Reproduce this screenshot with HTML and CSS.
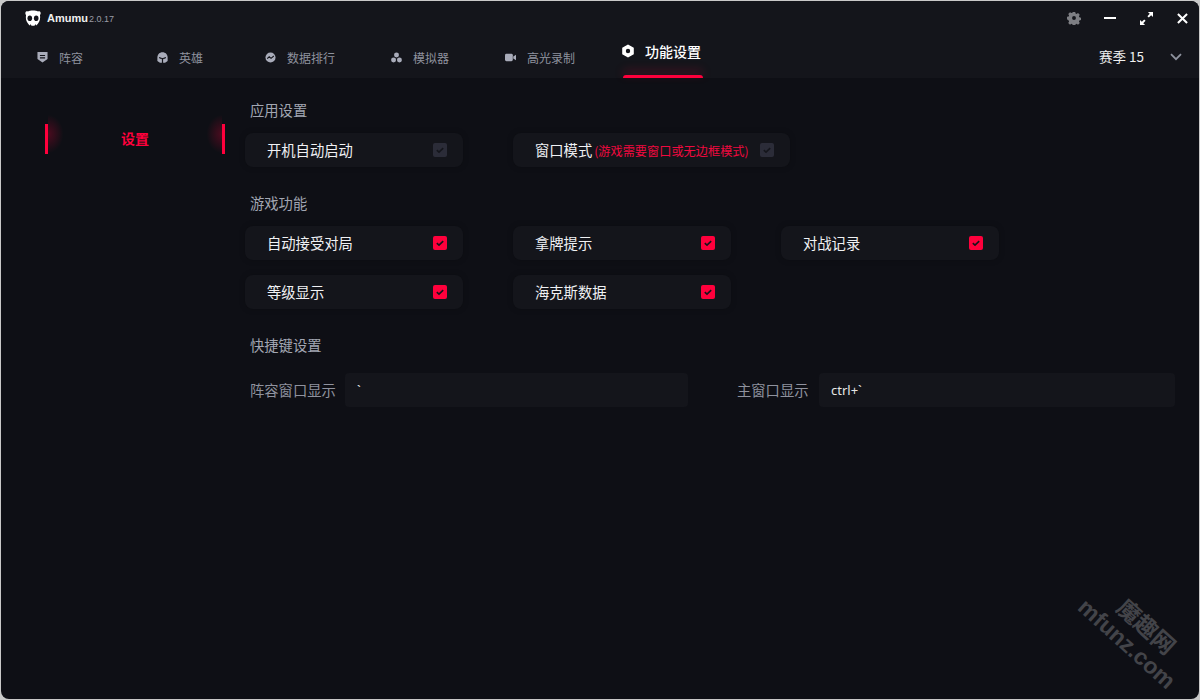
FILE: index.html
```html
<!DOCTYPE html>
<html lang="zh-CN">
<head>
    <meta charset="UTF-8">
    <meta name="viewport" content="width=device-width, initial-scale=1.0">
    <title>Amumu</title>
    <link rel="stylesheet" href="styles.css">
</head>
<body>
    <div class="window">
        <header class="header">
            <div class="titlebar">
                <svg class="logo" viewBox="0 0 16 16">
                    <path fill="#fff" d="M3 1.500C5 .3 11 .3 13 1.500 14 1 15.400 1.400 15.600 2.800 15.800 4 15.400 4.600 15 5 15.400 8 15 11 13.400 13 12.400 14.200 11.500 15.400 11 15.400L10.500 14 9.500 15.800H6.500L5.500 14 5 15.400C4.500 15.400 3.600 14.200 2.600 13 1 11 .6 8 1 5 .6 4.600 .2 4 .4 2.800 .6 1.400 2 1 3 1.500Z"/>
                    <ellipse cx="4.800" cy="8.300" rx="2.300" ry="2.800" fill="#14151b"/>
                    <ellipse cx="11.200" cy="8.300" rx="2.300" ry="2.800" fill="#14151b"/>
                </svg>
                <span class="app-name">Amumu</span>
                <span class="app-version">2.0.17</span>
                <div class="window-controls">
                    <svg class="control gear" viewBox="0 0 16 16">
                        <path fill="#7d7e83" fill-rule="evenodd" d="M6.600 1h2.800l.4 1.900 1.100.5 1.700-1 2 2-1 1.700.5 1.100 1.900.4v2.800l-1.900.4-.5 1.100 1 1.700-2 2-1.700-1-1.100.5-.4 1.900H6.600l-.4-1.900-1.100-.5-1.700 1-2-2 1-1.700-.5-1.100L0 9.400V6.600l1.900-.4.5-1.100-1-1.700 2-2 1.700 1 1.100-.5zM8 5.800a2.200 2.200 0 1 0 0 4.400 2.200 2.200 0 0 0 0-4.400z"/>
                    </svg>
                    <svg class="control minimize" viewBox="0 0 12 12">
                        <rect y="5" width="12" height="2" fill="#fff"/>
                    </svg>
                    <svg class="control maximize" viewBox="0 0 14 14">
                        <path fill="#fff" d="M8.500 0H14V5.500L12 3.500 9.500 6 8 4.500 10.500 2zM5.500 14H0V8.500L2 10.500 4.500 8 6 9.500 3.500 12z"/>
                    </svg>
                    <svg class="control close" viewBox="0 0 12 12">
                        <path stroke="#fff" stroke-width="2.200" d="M1 1l10 10M11 1L1 11"/>
                    </svg>
                </div>
            </div>
            <nav class="nav">
                <a class="nav-item">
                    <svg class="nav-icon" viewBox="0 0 12 12">
                        <path fill="#a9acba" fill-rule="evenodd" d="M.5 0h11v7.500L6 11.500.5 7.500zM3.200 3.200v1.200h5.600V3.200zM3.200 5.800V7h5.600V5.800z"/>
                    </svg>
                    <span>阵容</span>
                </a>
                <a class="nav-item">
                    <svg class="nav-icon" viewBox="0 0 12 12">
                        <path fill="#a9acba" d="M6 .3C9.200 .3 11.600 2.700 11.600 6V9.700L8.800 11.800H3.200L.4 9.700V6C.4 2.700 2.800 .3 6 .3Z"/>
                        <path fill="none" stroke="#14151b" stroke-width="1.300" d="M6 6.500V12M2.300 6 5.200 7.200M9.700 6 6.800 7.200"/>
                    </svg>
                    <span>英雄</span>
                </a>
                <a class="nav-item">
                    <svg class="nav-icon" viewBox="0 0 12 12">
                        <circle cx="6" cy="6" r="5.500" fill="#a9acba"/>
                        <path fill="none" stroke="#14151b" stroke-width="1.200" d="M2.400 7.300 4.600 5.200 6.600 6.900 9.600 4.400"/>
                    </svg>
                    <span>数据排行</span>
                </a>
                <a class="nav-item">
                    <svg class="nav-icon" viewBox="0 0 12 12">
                        <circle cx="6" cy="3.200" r="2.700" fill="#a9acba"/>
                        <circle cx="2.800" cy="8.700" r="2.700" fill="#a9acba"/>
                        <circle cx="9.200" cy="8.700" r="2.700" fill="#a9acba"/>
                    </svg>
                    <span>模拟器</span>
                </a>
                <a class="nav-item">
                    <svg class="nav-icon" viewBox="0 0 12 12">
                        <rect x="0" y="2" width="8.500" height="8" rx="1.500" fill="#a9acba"/>
                        <path fill="#a9acba" d="M9 5 12 3V9L9 7z"/>
                    </svg>
                    <span>高光录制</span>
                </a>
                <a class="nav-item nav-item-active">
                    <svg class="nav-icon" viewBox="0 0 14 14">
                        <path fill="#fff" fill-rule="evenodd" d="M7 .5 12.800 3.700V10.300L7 13.500 1.200 10.300V3.700zM7 4.800a2.200 2.200 0 1 0 0 4.400 2.200 2.200 0 0 0 0-4.400z"/>
                    </svg>
                    <span>功能设置</span>
                </a>
                <div class="season">
                    <span>赛季 15</span>
                    <svg class="chevron" viewBox="0 0 12 8">
                        <path fill="none" stroke="#8e929e" stroke-width="1.800" d="M1 1.200 6 6.200 11 1.200"/>
                    </svg>
                </div>
            </nav>
        </header>

        <div class="body">
            <aside class="sidebar">
                <div class="side-item">设置</div>
            </aside>

            <main class="main">
                <h2 class="section-title">应用设置</h2>
                <div class="card-row">
                    <div class="card">
                        <span class="card-label">开机自动启动</span>
                        <span class="check check-disabled"><svg viewBox="0 0 14 14"><path d="M3.800 7.200 6 9.200 10.200 5.200"/></svg></span>
                    </div>
                    <div class="card card-wide">
                        <span class="card-label">窗口模式<small class="note">(游戏需要窗口或无边框模式)</small></span>
                        <span class="check check-disabled"><svg viewBox="0 0 14 14"><path d="M3.800 7.200 6 9.200 10.200 5.200"/></svg></span>
                    </div>
                </div>

                <h2 class="section-title">游戏功能</h2>
                <div class="card-row">
                    <div class="card">
                        <span class="card-label">自动接受对局</span>
                        <span class="check"><svg viewBox="0 0 14 14"><path d="M3.800 7.200 6 9.200 10.200 5.200"/></svg></span>
                    </div>
                    <div class="card">
                        <span class="card-label">拿牌提示</span>
                        <span class="check"><svg viewBox="0 0 14 14"><path d="M3.800 7.200 6 9.200 10.200 5.200"/></svg></span>
                    </div>
                    <div class="card">
                        <span class="card-label">对战记录</span>
                        <span class="check"><svg viewBox="0 0 14 14"><path d="M3.800 7.200 6 9.200 10.200 5.200"/></svg></span>
                    </div>
                </div>
                <div class="card-row">
                    <div class="card">
                        <span class="card-label">等级显示</span>
                        <span class="check"><svg viewBox="0 0 14 14"><path d="M3.800 7.200 6 9.200 10.200 5.200"/></svg></span>
                    </div>
                    <div class="card">
                        <span class="card-label">海克斯数据</span>
                        <span class="check"><svg viewBox="0 0 14 14"><path d="M3.800 7.200 6 9.200 10.200 5.200"/></svg></span>
                    </div>
                </div>

                <h2 class="section-title section-title-keys">快捷键设置</h2>
                <div class="hotkey-row">
                    <label class="hotkey-label">阵容窗口显示</label>
                    <input class="hotkey-input hotkey-input-team" type="text" value="`">
                    <label class="hotkey-label hotkey-label-main">主窗口显示</label>
                    <input class="hotkey-input hotkey-input-main" type="text" value="ctrl+`">
                </div>
            </main>
        </div>

        <div class="watermark">
            <span class="watermark-cn">魔趣网</span>
            <span class="watermark-en">mfunz.com</span>
        </div>
    </div>
</body>
</html>
```

FILE: styles.css
```css
* {
    box-sizing: border-box;
}

html, body {
    height: 100%;
}

body {
    margin: 0;
    background-color: #c9c9c9;
    font-family: "Noto Sans CJK SC", "Noto Sans", sans-serif;
    overflow: hidden;
}

.window {
    position: relative;
    display: flex;
    flex-direction: column;
    width: 1198px;
    height: 698px;
    margin: 1px;
    border-radius: 8px;
    background-color: #0e0f15;
    overflow: hidden;
}

/* header */
.header {
    height: 77px;
    background-color: #14151b;
    flex-shrink: 0;
}

.titlebar {
    display: flex;
    align-items: center;
    height: 34px;
    padding-left: 24px;
}

.logo {
    width: 16px;
    height: 16px;
}

.app-name {
    margin-left: 6px;
    font-family: "Liberation Sans", Arial, sans-serif;
    font-size: 11px;
    font-weight: bold;
    color: #f0f0f0;
}

.app-version {
    margin-left: 1px;
    margin-top: 2px;
    font-family: "Liberation Sans", Arial, sans-serif;
    font-size: 9px;
    color: #9a9ca6;
}

.window-controls {
    display: flex;
    align-items: center;
    margin-left: auto;
    padding-right: 11px;
}

.control {
    display: block;
}

.gear {
    width: 14px;
    height: 14px;
}

.minimize {
    width: 12px;
    height: 12px;
    margin-left: 23px;
}

.maximize {
    width: 13px;
    height: 13px;
    margin-left: 24px;
}

.close {
    width: 11px;
    height: 11px;
    margin-left: 24px;
}

.nav {
    display: grid;
    grid-template-columns: 120px 108px 126px 114px 116px 82px 1fr;
    height: 43px;
    padding-left: 36px;
}

.nav-item {
    display: flex;
    align-items: center;
    height: 43px;
    padding-top: 2px;
    font-size: 12px;
    color: #8f929e;
    cursor: pointer;
}

.nav-icon {
    width: 11px;
    height: 11px;
    margin-right: 11px;
}

.nav-item-active {
    position: relative;
    padding-top: 0;
    padding-bottom: 11px;
    font-size: 14px;
    font-weight: 500;
    color: #fff;
}

.nav-item-active .nav-icon {
    width: 14px;
    height: 14px;
    margin-right: 10px;
}

.nav-item-active::after {
    content: "";
    position: absolute;
    left: 2px;
    bottom: 0;
    width: 80px;
    height: 3px;
    border-radius: 3px 3px 0 0;
    background-color: #ff003c;
    box-shadow: 0 -4px 10px rgba(255, 0, 60, 0.35);
}

.season {
    display: flex;
    align-items: center;
    justify-content: flex-end;
    padding-right: 17px;
    padding-bottom: 1px;
    font-size: 13.5px;
    color: #f0f0f0;
}

.chevron {
    width: 12px;
    height: 8px;
    margin-left: 26px;
    margin-top: 2px;
}

/* body */
.body {
    display: flex;
    flex: 1;
}

.sidebar {
    width: 180px;
    margin-left: 44px;
    padding-top: 46px;
    flex-shrink: 0;
}

.side-item {
    position: relative;
    height: 30px;
    line-height: 28px;
    text-align: center;
    font-size: 14px;
    font-weight: bold;
    color: #ff003c;
    border-left: 3px solid #ff003c;
    border-right: 3px solid #ff003c;
}

.side-item::before,
.side-item::after {
    content: "";
    position: absolute;
    top: -10px;
    bottom: 0;
    width: 16px;
}

.side-item::before {
    left: 0;
    background: radial-gradient(ellipse at left center, rgba(255, 0, 60, 0.26), rgba(255, 0, 60, 0) 68%);
}

.side-item::after {
    right: 0;
    background: radial-gradient(ellipse at right center, rgba(255, 0, 60, 0.26), rgba(255, 0, 60, 0) 68%);
}

.main {
    flex: 1;
    margin-left: 20px;
    padding-top: 22px;
}

.section-title {
    margin: 26px 0 13px 5px;
    font-size: 14.3px;
    line-height: 20px;
    font-weight: 400;
    color: #a2a6b2;
}

.section-title:first-child {
    margin-top: 0;
    margin-bottom: 13px;
}

.section-title-keys {
    margin-bottom: 18px;
}

.card-row {
    display: flex;
    gap: 50px;
    margin-bottom: 15px;
}

.card-row:has(+ .section-title) {
    margin-bottom: 0;
}

.card {
    display: flex;
    align-items: center;
    justify-content: space-between;
    width: 218px;
    height: 34px;
    padding: 0 16px 0 22px;
    border-radius: 8px;
    background-color: #14151b;
    box-shadow: 0 0 6px rgba(0, 0, 0, 0.2);
}

.card-wide {
    width: 277px;
}

.card-label {
    padding-bottom: 2px;
    font-size: 14.3px;
    color: #f0f1f4;
    white-space: nowrap;
}

.note {
    margin-left: 2px;
    font-size: 12.2px;
    color: #f0093f;
}

.check {
    display: block;
    width: 14px;
    height: 14px;
    border-radius: 2px;
    background-color: #ff003c;
}

.check svg {
    display: block;
    width: 14px;
    height: 14px;
    fill: none;
    stroke: #14151b;
    stroke-width: 1.6;
}

.check-disabled {
    background-color: #2b2c38;
}

.hotkey-row {
    display: flex;
    align-items: center;
    padding-left: 5px;
}

.hotkey-label {
    width: 95px;
    padding-bottom: 2px;
    font-size: 14.3px;
    color: #8f929e;
}

.hotkey-label-main {
    width: 82px;
    margin-left: 49px;
}

.hotkey-input {
    height: 34px;
    padding: 0 12px;
    border: none;
    border-radius: 4px;
    outline: none;
    background-color: #14151b;
    font-family: "Noto Sans", sans-serif;
    font-size: 13px;
    color: #e6e6e6;
}

.hotkey-input-team {
    width: 343px;
}

.hotkey-input-main {
    width: 356px;
}

/* watermark */
.watermark {
    position: absolute;
    right: 3px;
    bottom: 40px;
    display: flex;
    flex-direction: column;
    align-items: center;
    transform: rotate(42deg);
    color: #434449;
    font-weight: bold;
    line-height: 1;
    pointer-events: none;
}

.watermark-cn {
    font-size: 23px;
    margin-bottom: 4px;
    margin-left: 6px;
}

.watermark-en {
    font-family: "Liberation Sans", Arial, sans-serif;
    font-size: 23px;
}
```
